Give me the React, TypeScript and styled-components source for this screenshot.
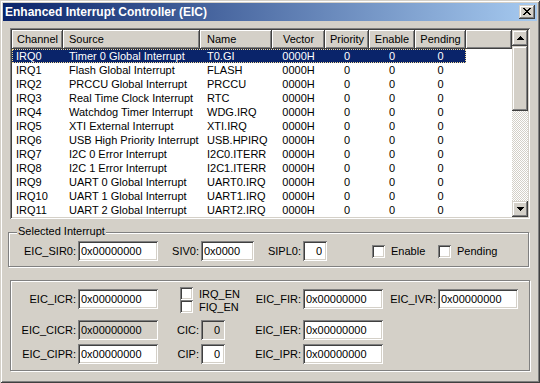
import React from "react";
import styled, { createGlobalStyle } from "styled-components";

const GlobalStyle = createGlobalStyle`
  html, body {
    margin: 0;
    padding: 0;
    background: #d4d0c8;
  }
  body {
    font-family: "Liberation Sans", Arial, sans-serif;
    font-size: 11px;
    color: #000;
  }
  * {
    box-sizing: border-box;
  }
`;

const raised = `
  box-shadow: inset -1px -1px 0 #404040, inset 1px 1px 0 #d4d0c8,
    inset -2px -2px 0 #808080, inset 2px 2px 0 #ffffff;
`;
const sunken = `
  box-shadow: inset 1px 1px 0 #808080, inset -1px -1px 0 #ffffff,
    inset 2px 2px 0 #404040, inset -2px -2px 0 #d4d0c8;
`;

type Column = {
  title: string;
  width: number;
  align: "left" | "center";
  headPad: number;
  cellPad: number;
};

const columns: Column[] = [
  { title: "Channel", width: 51, align: "left", headPad: 5, cellPad: 4 },
  { title: "Source", width: 137, align: "left", headPad: 6, cellPad: 6 },
  { title: "Name", width: 72, align: "left", headPad: 7, cellPad: 7 },
  { title: "Vector", width: 53, align: "center", headPad: 0, cellPad: 0 },
  { title: "Priority", width: 44, align: "center", headPad: 0, cellPad: 0 },
  { title: "Enable", width: 46, align: "center", headPad: 0, cellPad: 0 },
  { title: "Pending", width: 51, align: "center", headPad: 0, cellPad: 0 },
];

const interrupts = [
  ["IRQ0", "Timer 0 Global Interrupt", "T0.GI"],
  ["IRQ1", "Flash Global Interrupt", "FLASH"],
  ["IRQ2", "PRCCU Global Interrupt", "PRCCU"],
  ["IRQ3", "Real Time Clock Interrupt", "RTC"],
  ["IRQ4", "Watchdog Timer Interrupt", "WDG.IRQ"],
  ["IRQ5", "XTI External Interrupt", "XTI.IRQ"],
  ["IRQ6", "USB High Priority Interrupt", "USB.HPIRQ"],
  ["IRQ7", "I2C 0 Error Interrupt", "I2C0.ITERR"],
  ["IRQ8", "I2C 1 Error Interrupt", "I2C1.ITERR"],
  ["IRQ9", "UART 0 Global Interrupt", "UART0.IRQ"],
  ["IRQ10", "UART 1 Global Interrupt", "UART1.IRQ"],
  ["IRQ11", "UART 2 Global Interrupt", "UART2.IRQ"],
];

// pixel pattern of the classic close glyph
const closeGlyph = [
  "XX....XX",
  ".XX..XX.",
  "..XXXX..",
  "...XX...",
  "..XXXX..",
  ".XX..XX.",
  "XX....XX",
];

function CloseIcon() {
  const rects: React.ReactNode[] = [];
  closeGlyph.forEach((row, y) => {
    row.split("").forEach((c, x) => {
      if (c === "X") rects.push(<rect key={`${x}-${y}`} x={x} y={y} width={1} height={1} />);
    });
  });
  return (
    <svg width="8" height="7" viewBox="0 0 8 7" fill="#000" shapeRendering="crispEdges">
      {rects}
    </svg>
  );
}

function Arrow({ down }: { down?: boolean }) {
  return (
    <svg width="7" height="4" viewBox="0 0 7 4" fill="#000" shapeRendering="crispEdges">
      {down ? (
        <path d="M0 0h7v1H0zM1 1h5v1H1zM2 2h3v1H2zM3 3h1v1H3z" />
      ) : (
        <path d="M3 0h1v1H3zM2 1h3v1H2zM1 2h5v1H1zM0 3h7v1H0z" />
      )}
    </svg>
  );
}

function App() {
  return (
    <>
      <GlobalStyle />
      <Window>
        <TitleBar>
          <Title>Enhanced Interrupt Controller (EIC)</Title>
          <CloseButton>
            <CloseIcon />
          </CloseButton>
        </TitleBar>

        <ListView>
          <ListArea>
            <HeaderRow>
              {columns.map((col) => (
                <HeaderCell key={col.title} $w={col.width} $align={col.align} $pad={col.headPad}>
                  {col.title}
                </HeaderCell>
              ))}
              <HeaderFiller />
            </HeaderRow>
            {interrupts.map((item, index) => {
              const values = [...item, "0000H", "0", "0", "0"];
              return (
                <Row key={item[0]} $selected={index === 0}>
                  {columns.map((col, i) => (
                    <Cell key={col.title} $w={col.width} $align={col.align} $pad={col.cellPad}>
                      {values[i]}
                    </Cell>
                  ))}
                </Row>
              );
            })}
          </ListArea>
          <ScrollBar>
            <ScrollButton>
              <Arrow />
            </ScrollButton>
            <Thumb />
            <Track />
            <ScrollButton>
              <Arrow down />
            </ScrollButton>
          </ScrollBar>
        </ListView>

        <GroupBox $ml={5} $mr={8} $pt={8} $pb={5}>
          <Legend>Selected Interrupt</Legend>
          <SelectedRow>
            <FieldLabel>EIC_SIR0:</FieldLabel>
            <TextBox $w={80} readOnly value="0x00000000" />
            <FieldLabel>SIV0:</FieldLabel>
            <TextBox $w={53} readOnly value="0x0000" />
            <FieldLabel>SIPL0:</FieldLabel>
            <TextBox $w={24} $right readOnly value="0" />
            <CheckItem $ml={45} $w={66}>
              <CheckBox />
              Enable
            </CheckItem>
            <CheckItem $ml={0} $w={70}>
              <CheckBox />
              Pending
            </CheckItem>
          </SelectedRow>
        </GroupBox>

        <GroupBox $ml={7} $mr={7} $pt={8} $pb={6}>
          <RegisterGrid>
            <FieldLabel>EIC_ICR:</FieldLabel>
            <TextBox $w={80} readOnly value="0x00000000" />
            <CheckStack>
              <CheckItem $ml={0} $w={60} $h={13}>
                <CheckBox />
                IRQ_EN
              </CheckItem>
              <CheckItem $ml={0} $w={60} $h={13}>
                <CheckBox />
                FIQ_EN
              </CheckItem>
            </CheckStack>
            <FieldLabel>EIC_FIR:</FieldLabel>
            <TextBox $w={80} readOnly value="0x00000000" />
            <FieldLabel>EIC_IVR:</FieldLabel>
            <TextBox $w={80} readOnly value="0x00000000" />

            <FieldLabel>EIC_CICR:</FieldLabel>
            <TextBox $w={80} $disabled readOnly value="0x00000000" />
            <FieldLabel>CIC:</FieldLabel>
            <TextBox $w={24} $right $disabled readOnly value="0" />
            <FieldLabel>EIC_IER:</FieldLabel>
            <TextBox $w={80} readOnly value="0x00000000" />
            <span />
            <span />

            <FieldLabel>EIC_CIPR:</FieldLabel>
            <TextBox $w={80} readOnly value="0x00000000" />
            <FieldLabel>CIP:</FieldLabel>
            <TextBox $w={24} $right readOnly value="0" />
            <FieldLabel>EIC_IPR:</FieldLabel>
            <TextBox $w={80} readOnly value="0x00000000" />
          </RegisterGrid>
        </GroupBox>
      </Window>
    </>
  );
}

const Window = styled.div`
  width: 540px;
  height: 383px;
  padding: 3px;
  background: #d4d0c8;
  display: flex;
  flex-direction: column;
  box-shadow: inset 1px 1px 0 #d4d0c8, inset -1px -1px 0 #404040,
    inset 2px 2px 0 #ffffff, inset -2px -2px 0 #808080;
`;

const TitleBar = styled.div`
  height: 18px;
  flex: none;
  display: flex;
  align-items: center;
  justify-content: space-between;
  padding: 0 2px;
  background: linear-gradient(to right, #0a246a, #a6caf0);
`;

const Title = styled.span`
  color: #ffffff;
  font-weight: bold;
  font-size: 12px;
  white-space: nowrap;
`;

const CloseButton = styled.div`
  width: 16px;
  height: 14px;
  display: flex;
  align-items: center;
  justify-content: center;
  padding-bottom: 1px;
  background: #d4d0c8;
  ${raised}
`;

const ListView = styled.div`
  margin: 7px 7px 0 7px;
  height: 191px;
  flex: none;
  padding: 2px;
  display: flex;
  background: #ffffff;
  ${sunken}
`;

const ListArea = styled.div`
  flex: 1;
  display: flex;
  flex-direction: column;
  overflow: hidden;
`;

const HeaderRow = styled.div`
  display: flex;
  height: 19px;
  flex: none;
`;

const HeaderCell = styled.div<{ $w: number; $align: string; $pad: number }>`
  width: ${({ $w }) => $w}px;
  flex: none;
  padding-left: ${({ $pad }) => $pad}px;
  text-align: ${({ $align }) => $align};
  line-height: 18px;
  white-space: nowrap;
  overflow: hidden;
  background: #d4d0c8;
  box-shadow: inset -1px -1px 0 #404040, inset 1px 1px 0 #ffffff,
    inset -2px -2px 0 #808080;
`;

const HeaderFiller = styled.div`
  flex: 1;
  background: #d4d0c8;
  box-shadow: inset -1px -1px 0 #404040, inset 1px 1px 0 #ffffff,
    inset -2px -2px 0 #808080;
`;

const Row = styled.div<{ $selected?: boolean }>`
  display: flex;
  width: 454px;
  height: 14px;
  line-height: 14px;
  flex: none;
  background: ${({ $selected }) => ($selected ? "#0a246a" : "transparent")};
  color: ${({ $selected }) => ($selected ? "#ffffff" : "#000000")};
  outline: ${({ $selected }) => ($selected ? "1px dotted #f5db95" : "none")};
  outline-offset: -1px;
`;

const Cell = styled.div<{ $w: number; $align: string; $pad: number }>`
  width: ${({ $w }) => $w}px;
  flex: none;
  padding-left: ${({ $pad }) => $pad}px;
  text-align: ${({ $align }) => $align};
  white-space: nowrap;
  overflow: hidden;
`;

const ScrollBar = styled.div`
  width: 16px;
  flex: none;
  display: flex;
  flex-direction: column;
`;

const ScrollButton = styled.div`
  width: 16px;
  height: 16px;
  flex: none;
  display: flex;
  align-items: center;
  justify-content: center;
  background: #d4d0c8;
  ${raised}
`;

const Thumb = styled.div`
  height: 65px;
  flex: none;
  background: #d4d0c8;
  ${raised}
`;

const Track = styled.div`
  flex: 1;
  background: repeating-conic-gradient(#d4d0c8 0 25%, #ffffff 0 50%) 0 0 / 2px 2px;
`;

const GroupBox = styled.div<{ $ml: number; $mr: number; $pt: number; $pb: number }>`
  position: relative;
  flex: none;
  margin: 13px ${({ $mr }) => $mr}px 0 ${({ $ml }) => $ml}px;
  padding: ${({ $pt }) => $pt}px 0 ${({ $pb }) => $pb}px 0;
  border: 1px solid #808080;
  box-shadow: inset 1px 1px 0 #ffffff, 1px 1px 0 #ffffff;
`;

const Legend = styled.span`
  position: absolute;
  top: -8px;
  left: 8px;
  padding: 0 1px;
  line-height: 13px;
  background: #d4d0c8;
`;

const SelectedRow = styled.div`
  display: grid;
  grid-template-columns: 69px 80px 43px 53px 49px 24px auto auto;
  align-items: center;
  justify-content: start;
`;

const RegisterGrid = styled.div`
  display: grid;
  grid-template-columns: 67px 80px 43px 24px 78px 80px 55px 80px;
  grid-template-rows: 31px 24px 20px;
  align-items: start;
`;

const FieldLabel = styled.label`
  height: 20px;
  line-height: 20px;
  padding-right: 2px;
  text-align: right;
  white-space: nowrap;
`;

const TextBox = styled.input<{ $w: number; $right?: boolean; $disabled?: boolean }>`
  width: ${({ $w }) => $w}px;
  height: 20px;
  margin: 0;
  padding: 0 ${({ $right }) => ($right ? 5 : 2)}px 0 3px;
  border: none;
  outline: none;
  font: inherit;
  color: #000000;
  text-align: ${({ $right }) => ($right ? "right" : "left")};
  background: ${({ $disabled }) => ($disabled ? "#d4d0c8" : "#ffffff")};
  ${sunken}
`;

const CheckStack = styled.div`
  grid-column: span 2;
  margin-top: -2px;
  padding-left: 22px;
  display: flex;
  flex-direction: column;
`;

const CheckItem = styled.label<{ $ml: number; $w: number; $h?: number }>`
  display: flex;
  align-items: center;
  gap: 6px;
  margin-left: ${({ $ml }) => $ml}px;
  width: ${({ $w }) => $w}px;
  height: ${({ $h }) => $h || 20}px;
  white-space: nowrap;
`;

const CheckBox = styled.span`
  width: 13px;
  height: 13px;
  flex: none;
  background: #ffffff;
  ${sunken}
`;

export default App;
